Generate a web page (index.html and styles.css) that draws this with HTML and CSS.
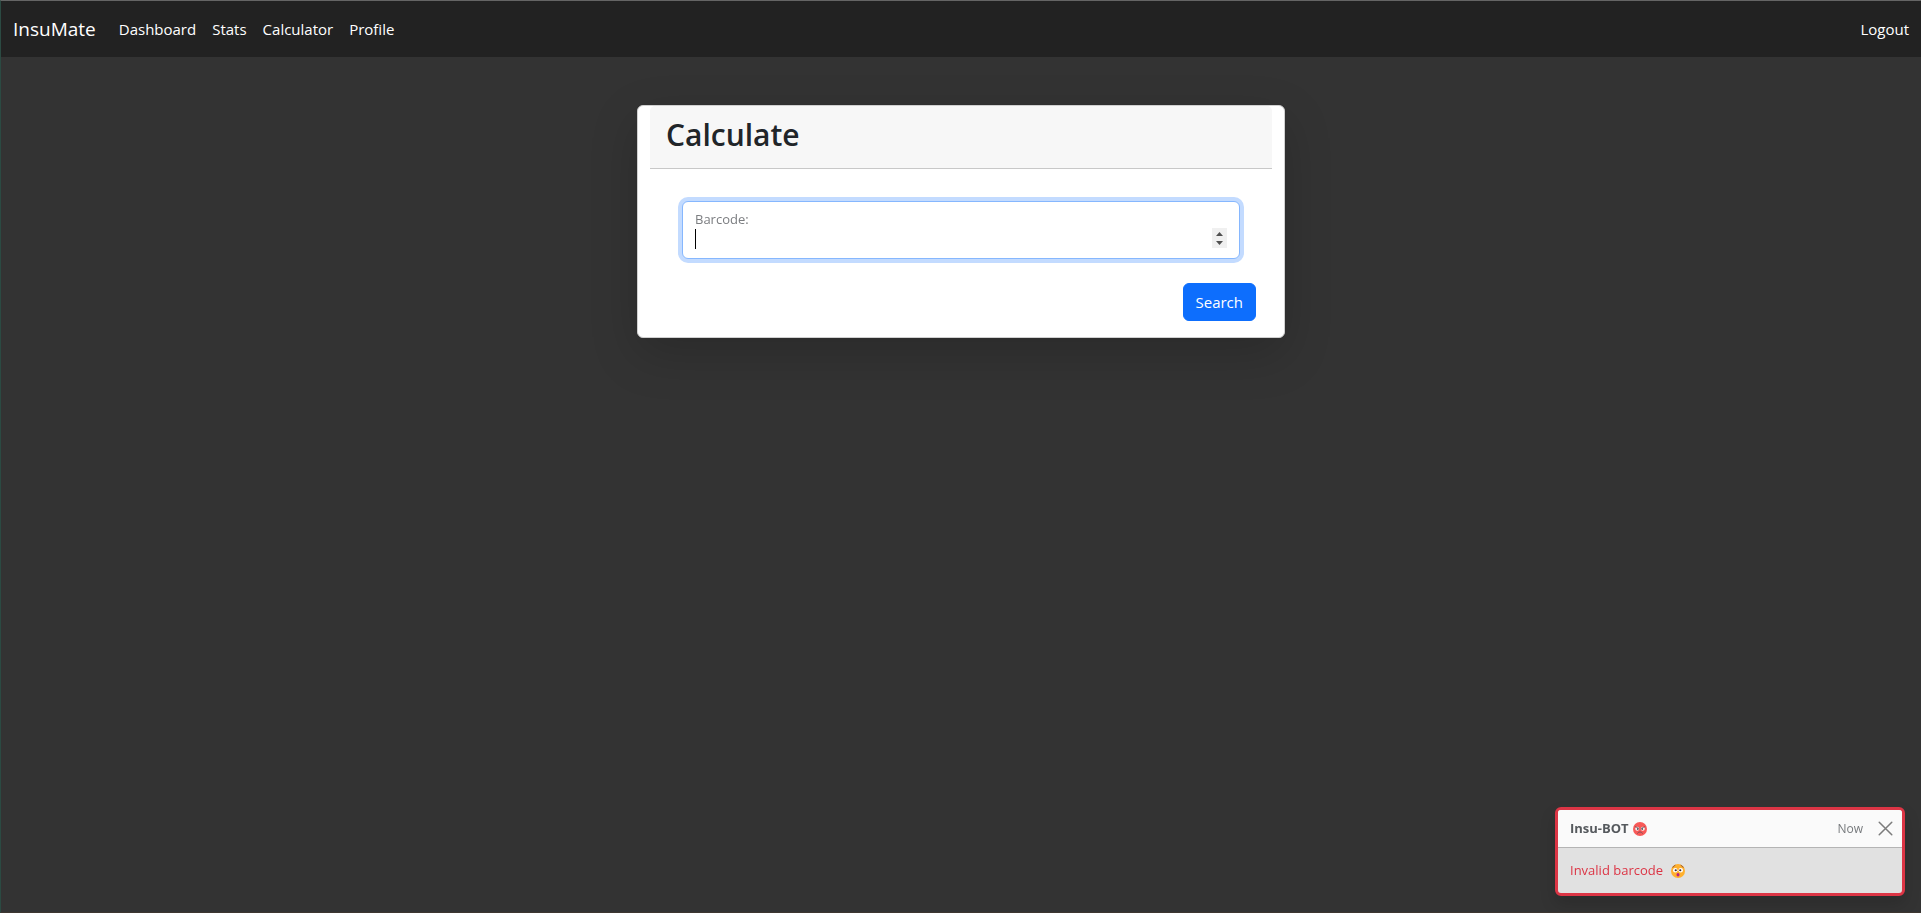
FILE: index.html
```html
<!DOCTYPE html>
<html lang="en">
<head>
<meta charset="utf-8">
<title>InsuMate</title>
<link rel="stylesheet" href="styles.css">
</head>
<body>
<nav class="navbar">
  <a class="brand" href="#">InsuMate</a>
  <ul class="nav-list">
    <li><a class="nav-link" href="#">Dashboard</a></li>
    <li><a class="nav-link" href="#">Stats</a></li>
    <li><a class="nav-link" href="#">Calculator</a></li>
    <li><a class="nav-link" href="#">Profile</a></li>
  </ul>
  <a class="nav-link logout" href="#">Logout</a>
</nav>
<main class="container">
  <section class="card">
    <header class="card-header"><h2 class="card-title">Calculate</h2></header>
    <form class="card-body">
      <div class="field">
        <input class="field-input" id="barcode" type="number" autofocus>
        <label class="field-label" for="barcode">Barcode:</label>
        <span class="caret"></span>
      </div>
      <button class="btn" type="button">Search</button>
    </form>
  </section>
</main>
<div class="toast" role="alert">
  <div class="toast-header">
    <strong class="toast-title">Insu-BOT</strong>
    <svg class="emoji emoji-angry" viewBox="0 0 28 28" aria-hidden="true">
      <circle cx="14" cy="14" r="14" fill="#f8312f"/>
      <circle cx="8.5" cy="13.5" r="4" fill="#fff"/><circle cx="19.5" cy="13.5" r="4" fill="#fff"/>
      <circle cx="9.5" cy="14" r="2" fill="#402a32"/><circle cx="18.5" cy="14" r="2" fill="#402a32"/>
      <path d="M4.500 9.500l7 3M23.500 9.500l-7 3M9 22.500q5-6 10 0" fill="none" stroke="#402a32" stroke-width="1.600" stroke-linecap="round"/>
    </svg>
    <small class="toast-time">Now</small>
    <button class="toast-close" type="button" aria-label="Close">
      <svg class="close-icon" viewBox="0 0 16 16" aria-hidden="true"><path d="M1.300 1.300l13.400 13.400M14.700 1.300L1.300 14.700" stroke="#000" stroke-width="1.600" stroke-linecap="round"/></svg>
    </button>
  </div>
  <div class="toast-body">
    <span>Invalid barcode</span>
    <svg class="emoji" viewBox="0 0 28 28" aria-hidden="true">
      <circle cx="14" cy="14" r="14" fill="#ffb02e"/>
      <circle cx="8.500" cy="12.500" r="4.500" fill="#fff"/><circle cx="19.500" cy="12.500" r="4.500" fill="#fff"/>
      <circle cx="9.500" cy="12.500" r="2.200" fill="#402a32"/><circle cx="18.500" cy="12.500" r="2.200" fill="#402a32"/>
      <path d="M3.500 6.500q3-1 4.500-4M24.500 6.500q-3-1-4.500-4" fill="none" stroke="#7d4533" stroke-width="1.600" stroke-linecap="round"/>
      <ellipse cx="14" cy="21.500" rx="3" ry="3.500" fill="#bb1d80"/>
    </svg>
  </div>
</div>
</body>
</html>
```
FILE: styles.css
```css
* { box-sizing: border-box; }
body {
  margin: 0;
  min-height: 100vh;
  border-top: 1px solid #656565;
  border-left: 1px solid #2b4a42;
  border-bottom: 1px solid #3e3731;
  background: #333;
  color: #212529;
  font-family: "Open Sans", "Noto Sans", sans-serif;
  font-size: 15px;
  line-height: 24px;
}
.navbar {
  display: flex;
  align-items: center;
  height: 56px;
  padding: 0 12px;
  background: #222;
}
.brand { margin-right: 15px; color: #fff; font-size: 19px; line-height: 30px; text-decoration: none; }
.nav-list { display: flex; margin: 0; padding: 0; list-style: none; }
.nav-link { display: block; padding: 8px; color: #fff; text-decoration: none; }
.logout { margin-left: auto; padding-right: 0; }
.container { max-width: 1320px; margin: 48px auto 0; padding: 0 12px; }
.card {
  width: 50%;
  margin: 0 auto;
  padding: 0 12px;
  border: 1px solid #d0d0d0;
  border-radius: 6px;
  background: #fff;
  box-shadow: 0 16px 48px rgba(0, 0, 0, 0.176);
}
.card-header {
  padding: 10px 16px 14px;
  border-bottom: 1px solid #c8c8c8;
  border-radius: 5px 5px 0 0;
  background: #f7f7f7;
}
.card-title { margin: 0; font-size: 30px; font-weight: 600; line-height: 38px; }
.card-body { display: flex; flex-direction: column; padding: 16px; }
.field { position: relative; margin: 16px; }
.field-input {
  display: block;
  width: 100%;
  height: 58px;
  padding: 26px 12px 10px;
  border: 1px solid #86b7fe;
  border-radius: 6px;
  outline: 0;
  background: #fff;
  box-shadow: 0 0 0 4px #c3dbff;
  caret-color: transparent;
  color: #212529;
  font: inherit;
}
.field-input::-webkit-inner-spin-button {
  width: 15px;
  height: 20px;
  appearance: none;
  background: #f0f0f0 url("data:image/svg+xml,%3Csvg xmlns='http://www.w3.org/2000/svg' viewBox='0 0 15 20'%3E%3Cpath d='M4 8L7.5 4L11 8ZM4 13L7.5 17L11 13Z' fill='%23505050'/%3E%3C/svg%3E") center / 15px 20px no-repeat;
  opacity: 1;
}
.field-label { position: absolute; top: 8px; left: 13px; color: #7b7d80; font-size: 13px; line-height: 20px; }
.caret { position: absolute; top: 28px; left: 13px; width: 1px; height: 20px; background: #000; }
.btn {
  align-self: flex-end;
  margin-top: 8px;
  padding: 6px 12px;
  border: 1px solid #0d6efd;
  border-radius: 6px;
  background: #0d6efd;
  color: #fff;
  font: inherit;
}
.toast {
  position: fixed;
  right: 16px;
  bottom: 17px;
  width: 350px;
  border: 3px solid #dc3545;
  border-radius: 6px;
  background: #e1e1e1;
  box-shadow: 0 8px 16px rgba(0, 0, 0, 0.15);
  font-size: 13px;
  line-height: 21px;
}
.toast-header {
  display: flex;
  align-items: center;
  padding: 8px 12px;
  border-bottom: 1px solid #b4b4b4;
  border-radius: 3px 3px 0 0;
  background: #fafafa;
  color: #55595d;
}
.emoji { width: 14px; height: 14px; }
.emoji-angry { margin-left: 4px; opacity: 0.8; }
.toast-time { margin-left: auto; color: #777a7d; font-size: 12px; }
.toast-close { display: flex; margin: 0 -6px 0 12px; padding: 3px; border: 0; background: none; opacity: 0.5; }
.close-icon { width: 15px; height: 15px; }
.toast-body { display: flex; align-items: center; gap: 8px; padding: 12px; color: #dc3545; }
```
